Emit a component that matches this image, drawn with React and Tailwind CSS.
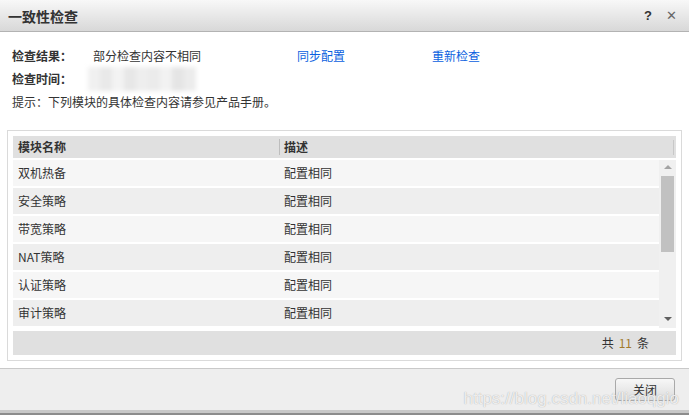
const MODULES = ['双机热备', '安全策略', '带宽策略', 'NAT策略', '认证策略', '审计策略']

// blurred timestamp mosaic
const MOSAIC = ['#f0f0f0', '#e9e9e9', '#f3f3f3', '#e7e7e7', '#eeeeee', '#ebebeb', '#f2f2f2', '#e5e5e5', '#ececec']

function UpArrow() {
  return <div className="w-0 h-0 border-x-[4px] border-x-transparent border-b-[4px] border-b-[#a3a3a3]" />
}

function DownArrow() {
  return <div className="w-0 h-0 border-x-[4px] border-x-transparent border-t-[4px] border-t-[#606060]" />
}

export default function App() {
  return (
    <div className="relative w-[689px] h-[416px] overflow-hidden bg-white font-['Noto_Sans_CJK_SC',sans-serif] text-[12px] leading-none text-[#333]">
      {/* Title bar */}
      <div className="h-[32px] flex items-center justify-between pl-[8px] pr-[12px] bg-gradient-to-b from-[#f8f8f8] to-[#d8d8d8] border-b border-[#b3b3b3]">
        <span className="text-[14px] font-bold text-[#333]">一致性检查</span>
        <div className="flex items-center gap-[14px]">
          <span className="font-['Liberation_Sans',sans-serif] font-bold text-[13px] text-[#333]">?</span>
          <span className="font-['Liberation_Sans',sans-serif] text-[13px] text-[#666]">✕</span>
        </div>
      </div>

      {/* Body */}
      <div className="h-[336px] flex flex-col pt-[12px]">
        <div className="h-[23px] flex items-center px-[12px]">
          <span className="w-[81px] font-bold">检查结果：</span>
          <span className="w-[204px]">部分检查内容不相同</span>
          <span className="w-[135px] text-[#0a5fe0] cursor-pointer">同步配置</span>
          <span className="text-[#0a5fe0] cursor-pointer">重新检查</span>
        </div>
        <div className="h-[23px] flex items-center px-[12px]">
          <span className="w-[76px] font-bold">检查时间：</span>
          <div className="flex h-[24px] blur-[2px]">
            {MOSAIC.map((c, i) => (
              <div key={i} className="w-[12px] h-full" style={{ backgroundColor: c }} />
            ))}
          </div>
        </div>
        <div className="h-[23px] flex items-center px-[12px]">
          提示：下列模块的具体检查内容请参见产品手册。
        </div>

        {/* Table panel */}
        <div className="mt-[17px] mx-[7px] border border-[#dadada] p-[5px]">
          <div className="h-[22px] flex items-center bg-[#e0e0e0]">
            <div className="w-[266px] pl-[5px] font-bold">模块名称</div>
            <div className="w-px h-[16px] bg-[#bdbdbd]" />
            <div className="flex-1 pl-[4px] font-bold">描述</div>
            <div className="w-px h-[15px] bg-[#c8c8c8] mr-[2px]" />
          </div>

          <div className="mt-[2px] flex h-[168px]">
            <div className="flex-1">
              {MODULES.map((name, i) => (
                <div
                  key={name}
                  className={`h-[28px] flex items-center border-b-2 border-white ${
                    i % 2 === 0 ? 'bg-[#f6f6f6]' : 'bg-[#eeeeee]'
                  }`}
                >
                  <div className="w-[266px] pl-[5px]">{name}</div>
                  <div className="flex-1 pl-[5px]">配置相同</div>
                </div>
              ))}
            </div>
            {/* Scrollbar */}
            <div className="w-[17px] bg-[#f0f0f0] flex flex-col items-center">
              <div className="h-[14px] flex items-center justify-center">
                <UpArrow />
              </div>
              <div className="mt-[2px] w-[13px] h-[76px] bg-[#c1c1c1]" />
              <div className="flex-1" />
              <div className="h-[14px] flex items-center justify-center mb-[2px]">
                <DownArrow />
              </div>
            </div>
          </div>

          <div className="mt-[3px] h-[24px] flex items-center justify-end pr-[27px] bg-[#e0e0e0]">
            共 <span className="mx-[5px] text-[#a17a2c]">11</span> 条
          </div>
        </div>
      </div>

      {/* Footer */}
      <div className="h-[42px] border-t border-[#c9c9c9] bg-[#eeeeee] flex items-center justify-end pr-[14px]">
        <button className="w-[60px] h-[23px] border border-[#a9a9a9] rounded-[3px] bg-gradient-to-b from-[#f7f7f7] to-[#dcdcdc] text-[#333] text-[12px]">
          关闭
        </button>
      </div>
      <div className="h-[3px] bg-[#c8c8c8]" />
      <div className="h-[2px] bg-[#8c8c8c]" />

      {/* Watermark */}
      <div className="absolute right-[10px] bottom-[9px] font-['Liberation_Sans',sans-serif] text-[17px] leading-none text-white/80 [text-shadow:0_0_1px_#9a9a9a] pointer-events-none">
        https://blog.csdn.net/liaoqgio
      </div>
    </div>
  )
}
